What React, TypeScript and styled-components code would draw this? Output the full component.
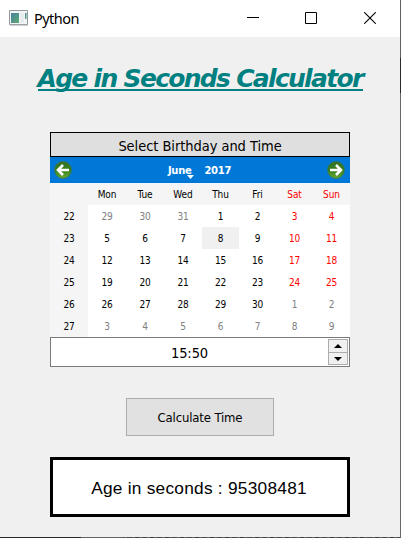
import React from "react";
import styled, { createGlobalStyle } from "styled-components";

const GlobalStyle = createGlobalStyle`
  * { box-sizing: border-box; }
  body { margin: 0; background: #f0f0f0; overflow: hidden; }
`;

const tahoma = `"DejaVu Sans Condensed", "DejaVu Sans", sans-serif`;
const wideSans = `"DejaVu Sans", Verdana, sans-serif`;

const Desktop = styled.div`
  width: 401px;
  height: 538px;
  padding: 0 1px 1px 0;
  background:
    linear-gradient(#606062 0 58px, #29292b 58px 93px, #68686a 93px) right / 1px 100% no-repeat,
    linear-gradient(90deg, #29292b 0 81px, #626264 81px 123px, transparent 123px),
    repeating-linear-gradient(90deg, #3c3c3e 0 4px, #626264 4px 7px, #4a4a4c 7px 12px, #68686a 12px 15px);
`;

const Window = styled.main`
  width: 400px;
  height: 537px;
  display: flex;
  flex-direction: column;
  align-items: center;
  background: #f0f0f0;
  color: #000;
  font-family: ${tahoma};
`;

const TitleBar = styled.header`
  width: 100%;
  height: 37px;
  flex: none;
  display: flex;
  align-items: center;
  padding: 0 1px 1px 9px;
  background: #fff;
`;

const AppName = styled.span`
  flex: 1;
  margin-left: 6px;
  font: 14.5px/20px "Noto Sans", sans-serif;
  letter-spacing: -0.55px;
`;

const WindowButton = styled.button`
  width: 58px;
  height: 36px;
  padding: 0;
  border: 0;
  display: grid;
  place-items: center;
  background: transparent;
  svg { display: block; }
  &:last-child { margin-left: 1px; }
`;

const Heading = styled.h1`
  width: 325px;
  height: 30px;
  margin: 24px 0 0;
  border-bottom: 2px solid #008080;
  color: #008080;
  font: italic bold 25px/36px ${wideSans};
  letter-spacing: -1.7px;
  white-space: nowrap;
`;

const Picker = styled.section`
  width: 300px;
  margin-top: 41px;
`;

const Caption = styled.div`
  height: 25px;
  border: 1px solid #000;
  background: #dfdfdf;
  font-size: 14.5px;
  line-height: 27px;
  letter-spacing: -0.05px;
  text-align: center;
`;

const MonthBar = styled.div`
  height: 26px;
  padding: 0 5px 0 4px;
  display: flex;
  align-items: center;
  justify-content: space-between;
  background: #0078d7;
  color: #fff;
  font: bold 10px/26px ${wideSans};
  letter-spacing: -0.3px;
`;

const RoundButton = styled.button`
  width: 18px;
  height: 18px;
  padding: 0;
  border: 0;
  background: none;
  svg { display: block; }
`;

const MonthYear = styled.div`
  display: flex;
  gap: 13px;
  padding-top: 2px;
  line-height: 24px;
`;

const Month = styled.span`
  position: relative;
  svg { position: absolute; right: -3px; bottom: 4px; }
`;

const Days = styled.div`
  display: grid;
  grid-template-columns: repeat(4, 38px) repeat(4, 37px);
  grid-auto-rows: 22px;
  background: #fff;
`;

type Tone = "plain" | "muted" | "weekend";
const toneColor: Record<Tone, string> = { plain: "#000", muted: "#808080", weekend: "#ff0000" };

const Cell = styled.div<{ $tone?: Tone; $fill?: string }>`
  color: ${(p) => toneColor[p.$tone ?? "plain"]};
  background: ${(p) => p.$fill ?? "transparent"};
  font-size: 10px;
  line-height: 23px;
  letter-spacing: -0.1px;
  text-align: center;
`;

const TimeField = styled.div`
  height: 30px;
  display: flex;
  padding: 1px;
  border: 1px solid #7a7a7a;
  background: #fff;
`;

const TimeValue = styled.span`
  flex: 1;
  padding-right: 1px;
  font-size: 14.5px;
  line-height: 28px;
  letter-spacing: -0.1px;
  text-align: center;
`;

const Spinner = styled.div`
  width: 20px;
  height: 26px;
  display: grid;
  grid-template-rows: 14px 12px;
`;

const SpinButton = styled.button`
  padding: 0;
  display: grid;
  place-items: center;
  border: 1px solid #acacac;
  background: #f0f0f0;
  & + & { margin-top: -1px; }
  svg { display: block; }
`;

const Calculate = styled.button`
  width: 148px;
  height: 38px;
  flex: none;
  margin-top: 31px;
  padding: 1px 0 0;
  border: 1px solid #adadad;
  background: #e1e1e1;
  color: #000;
  font: 13px/16px ${tahoma};
  letter-spacing: -0.15px;
`;

const Result = styled.output`
  width: 300px;
  height: 60px;
  flex: none;
  margin-top: 21px;
  padding-right: 2px;
  border: 3px solid #000;
  background: #fff;
  font: 17.3px/56px "Liberation Sans", Arial, sans-serif;
  letter-spacing: 0.25px;
  text-align: center;
`;

const WindowIcon = () => (
  <svg width="19" height="16" viewBox="0 0 19 16">
    <defs>
      <linearGradient id="pane" x1="0" y1="0" x2="1" y2="1">
        <stop offset="0" stopColor="#477fa0" />
        <stop offset="1" stopColor="#5cac72" />
      </linearGradient>
    </defs>
    <path d="M.5.5h18v14H.5z" fill="#f3f4f6" stroke="#92979c" />
    <path d="M1 15.2h18" stroke="#b7babd" />
    <path d="M2 3h8v10H2z" fill="url(#pane)" />
    <path d="M11 3h4v10h-4z" fill="#e8ebed" />
    <path d="M16 3h1.5v6H16z" fill="url(#pane)" />
  </svg>
);

const ArrowIcon = ({ id, flip }: { id: string; flip?: boolean }) => (
  <svg width="18" height="18" viewBox="0 0 18 18">
    <defs>
      <linearGradient id={id} x1="0" y1="0" x2="0" y2="1">
        <stop offset="0" stopColor="#387129" />
        <stop offset=".5" stopColor="#347f1c" />
        <stop offset="1" stopColor="#68aa35" />
      </linearGradient>
    </defs>
    <circle cx="9" cy="9" r="8.4" fill={`url(#${id})`} stroke="#3f7440" strokeWidth=".7" />
    <path
      d="M15 9H4.5M9 4 4 9 9 14"
      transform={flip ? "translate(18 0) scale(-1 1)" : undefined}
      fill="none"
      stroke="#fff"
      strokeWidth="2.6"
    />
  </svg>
);

const weekdays = ["Mon", "Tue", "Wed", "Thu", "Fri", "Sat", "Sun"];
const weeks = Array.from({ length: 6 }, (_, w) => ({
  number: 22 + w,
  days: Array.from({ length: 7 }, (_, d) => {
    const offset = w * 7 + d - 2;
    const inMonth = offset >= 1 && offset <= 30;
    const day = offset < 1 ? offset + 31 : offset > 30 ? offset - 30 : offset;
    const tone: Tone = !inMonth ? "muted" : d > 4 ? "weekend" : "plain";
    return { day, tone, selected: inMonth && day === 8 };
  }),
}));

export default function App() {
  return (
    <Desktop>
      <GlobalStyle />
      <Window>
        <TitleBar>
          <WindowIcon />
          <AppName>Python</AppName>
          <WindowButton aria-label="Minimize">
            <svg width="12" height="12"><path d="M0 5.5h12" stroke="#000" /></svg>
          </WindowButton>
          <WindowButton aria-label="Maximize">
            <svg width="12" height="12"><path d="M.5.5h11v11H.5z" fill="none" stroke="#000" /></svg>
          </WindowButton>
          <WindowButton aria-label="Close">
            <svg width="12" height="12"><path d="m.3.3 11.4 11.4M11.7.3.3 11.7" stroke="#000" strokeWidth="1.1" /></svg>
          </WindowButton>
        </TitleBar>
        <Heading>Age in Seconds Calculator</Heading>
        <Picker>
          <Caption>Select Birthday and Time</Caption>
          <MonthBar>
            <RoundButton aria-label="Previous month"><ArrowIcon id="prev" /></RoundButton>
            <MonthYear>
              <Month>
                June
                <svg width="7" height="4"><path d="M0 0h7L3.5 4z" fill="#fff" /></svg>
              </Month>
              <span>2017</span>
            </MonthYear>
            <RoundButton aria-label="Next month"><ArrowIcon id="next" flip /></RoundButton>
          </MonthBar>
          <Days>
            <Cell $fill="#f5f5f5" />
            {weekdays.map((name, i) => (
              <Cell key={name} $fill="#f5f5f5" $tone={i > 4 ? "weekend" : "plain"}>{name}</Cell>
            ))}
            {weeks.map((week) => (
              <React.Fragment key={week.number}>
                <Cell $fill="#f5f5f5">{week.number}</Cell>
                {week.days.map((d, i) => (
                  <Cell key={i} $tone={d.tone} $fill={d.selected ? "#f0f0f0" : undefined}>{d.day}</Cell>
                ))}
              </React.Fragment>
            ))}
          </Days>
          <TimeField>
            <TimeValue>15:50</TimeValue>
            <Spinner>
              <SpinButton aria-label="Increase">
                <svg width="8" height="4"><path d="M0 4h8L4 0z" /></svg>
              </SpinButton>
              <SpinButton aria-label="Decrease">
                <svg width="8" height="4"><path d="M0 0h8L4 4z" /></svg>
              </SpinButton>
            </Spinner>
          </TimeField>
        </Picker>
        <Calculate>Calculate Time</Calculate>
        <Result>Age in seconds : 95308481</Result>
      </Window>
    </Desktop>
  );
}
